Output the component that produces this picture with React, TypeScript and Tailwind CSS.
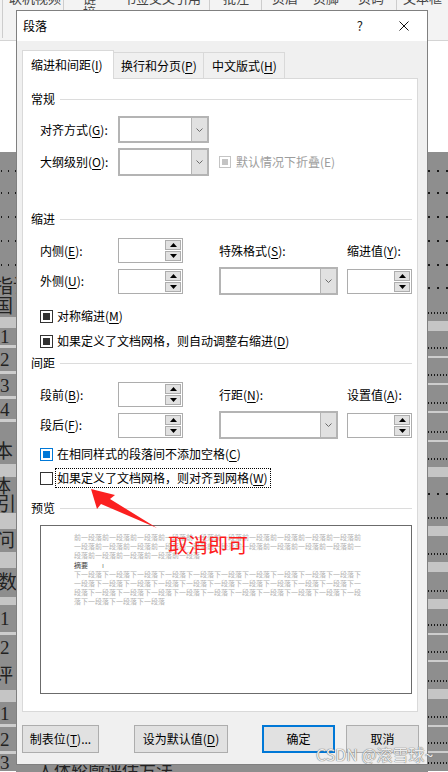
import React from "react";

type SegK = "g" | "sd" | "dd" | "band" | "line" | "t";
type Seg = { h: string; k: SegK; t?: string; o?: string };

const LEFT: Seg[] = [
  { h: "h-[8px]", k: "g" },
  { h: "h-[22px]", k: "sd" },
  { h: "h-[22px]", k: "sd" },
  { h: "h-[26px]", k: "sd" },
  { h: "h-[22px]", k: "sd" },
  { h: "h-[26px]", k: "sd" },
  { h: "h-[17px]", k: "t", t: "指论", o: "-ml-[6px]" },
  { h: "h-[22px]", k: "t", t: "国", o: "-ml-[6px]" },
  { h: "h-[11px]", k: "band" },
  { h: "h-[17px]", k: "t", t: "1", o: "ml-0" },
  { h: "h-[3px]", k: "line" },
  { h: "h-[23px]", k: "t", t: "2", o: "ml-0" },
  { h: "h-[3px]", k: "line" },
  { h: "h-[22px]", k: "t", t: "3", o: "ml-0" },
  { h: "h-[3px]", k: "line" },
  { h: "h-[20px]", k: "t", t: "4", o: "ml-0" },
  { h: "h-[3px]", k: "line" },
  { h: "h-[17px]", k: "g" },
  { h: "h-[25px]", k: "t", t: "本", o: "-ml-[6px]" },
  { h: "h-[13px]", k: "band" },
  { h: "h-[18px]", k: "t", t: "体", o: "-ml-[8px]" },
  { h: "h-[18px]", k: "t", t: "引", o: "-ml-[3px]" },
  { h: "h-[16px]", k: "band" },
  { h: "h-[23px]", k: "t", t: "问", o: "-ml-[4px]" },
  { h: "h-[16px]", k: "band" },
  { h: "h-[29px]", k: "t", t: "数", o: "-ml-[2px]" },
  { h: "h-[8px]", k: "band" },
  { h: "h-[27px]", k: "t", t: "1", o: "ml-0" },
  { h: "h-[3px]", k: "line" },
  { h: "h-[25px]", k: "t", t: "2", o: "ml-0" },
  { h: "h-[30px]", k: "t", t: "评", o: "-ml-[6px]" },
  { h: "h-[12px]", k: "band" },
  { h: "h-[22px]", k: "t", t: "1", o: "ml-0" },
  { h: "h-[3px]", k: "line" },
  { h: "h-[24px]", k: "t", t: "2", o: "ml-0" },
  { h: "h-[3px]", k: "line" },
  { h: "h-[17px]", k: "t", t: "3", o: "ml-0" },
];

const RIGHT: Seg[] = [
  { h: "h-[9px]", k: "g" },
  { h: "h-[20px]", k: "sd" },
  { h: "h-[23px]", k: "sd" },
  { h: "h-[26px]", k: "sd" },
  { h: "h-[22px]", k: "sd" },
  { h: "h-[26px]", k: "sd" },
  { h: "h-[20px]", k: "sd" },
  { h: "h-[23px]", k: "dd" },
  { h: "h-[10px]", k: "band" },
  { h: "h-[25px]", k: "dd" },
  { h: "h-[2px]", k: "line" },
  { h: "h-[25px]", k: "dd" },
  { h: "h-[2px]", k: "line" },
  { h: "h-[26px]", k: "dd" },
  { h: "h-[2px]", k: "line" },
  { h: "h-[27px]", k: "dd" },
  { h: "h-[2px]", k: "line" },
  { h: "h-[25px]", k: "dd" },
  { h: "h-[10px]", k: "band" },
  { h: "h-[34px]", k: "sd" },
  { h: "h-[15px]", k: "dd" },
  { h: "h-[10px]", k: "band" },
  { h: "h-[26px]", k: "dd" },
  { h: "h-[10px]", k: "band" },
  { h: "h-[27px]", k: "dd" },
  { h: "h-[10px]", k: "band" },
  { h: "h-[24px]", k: "dd" },
  { h: "h-[2px]", k: "line" },
  { h: "h-[25px]", k: "dd" },
  { h: "h-[2px]", k: "line" },
  { h: "h-[27px]", k: "dd" },
  { h: "h-[10px]", k: "band" },
  { h: "h-[26px]", k: "dd" },
  { h: "h-[2px]", k: "line" },
  { h: "h-[24px]", k: "dd" },
  { h: "h-[2px]", k: "line" },
  { h: "h-[18px]", k: "dd" },
];

function SegView({ s, side }: { s: Seg; side: "l" | "r" }) {
  if (s.k === "band") return <div className={`${s.h} shrink-0 bg-[#c5c5c5]`} />;
  if (s.k === "line") return <div className={`${s.h} shrink-0 bg-[#cdcdcd]`} />;
  if (s.k === "g") return <div className={`${s.h} shrink-0 bg-[#8e8e8e]`} />;
  if (s.k === "sd")
    return (
      <div
        className={`${s.h} flex shrink-0 items-center bg-[#8e8e8e] ${
          side === "l" ? "gap-[6px] pl-[1px]" : "gap-[7px] pl-0"
        }`}
      >
        <div className="h-[2px] w-[2px] bg-[#1a1a1a]" />
        <div className="h-[2px] w-[2px] bg-[#1a1a1a]" />
        <div className="h-[2px] w-[2px] bg-[#1a1a1a]" />
      </div>
    );
  if (s.k === "dd")
    return (
      <div className={`${s.h} flex shrink-0 flex-col justify-end bg-[#8e8e8e] pb-[7px]`}>
        <div className="h-[2px] w-full bg-[linear-gradient(to_right,#1a1a1a_50%,transparent_50%)] bg-[length:3px_2px]" />
      </div>
    );
  return (
    <div className={`${s.h} flex shrink-0 items-center overflow-visible bg-[#8e8e8e]`}>
      <span
        className={`${s.o} whitespace-nowrap font-['Liberation_Serif','Noto_Sans_CJK_SC',serif] text-[19px] leading-none text-[#222]`}
      >
        {s.t}
      </span>
    </div>
  );
}

function Ribbon() {
  return (
    <div className="flex h-[41px] shrink-0 overflow-hidden border-b border-[#d4d4d4] bg-[#f3f3f3] text-[13px] leading-[14px] text-[#444]">
      <div className="h-[38px] w-[3px] border-r border-[#cdcdcd]" />
      <div className="h-[38px] w-[61px] border-r border-[#cdcdcd] pl-[6px]">
        <div className="-mt-[9px] whitespace-nowrap">联机视频</div>
      </div>
      <div className="flex h-[38px] w-[146px] border-r border-[#cdcdcd] pl-[19px]">
        <div className="-mt-[9px] flex flex-col">
          <span>链</span>
          <span>接</span>
        </div>
        <div className="-mt-[9px] ml-[27px] whitespace-nowrap">书签</div>
        <div className="-mt-[9px] ml-[0px] whitespace-nowrap">交叉引用</div>
      </div>
      <div className="h-[38px] w-[52px] border-r border-[#cdcdcd] pl-[13px]">
        <div className="-mt-[9px] whitespace-nowrap">批注</div>
      </div>
      <div className="flex h-[38px] w-[135px] border-r border-[#cdcdcd] pl-[10px]">
        <div className="-mt-[9px] whitespace-nowrap">页眉</div>
        <div className="-mt-[9px] ml-[15px] whitespace-nowrap">页脚</div>
        <div className="-mt-[9px] ml-[19px] whitespace-nowrap">页码</div>
      </div>
      <div className="h-[38px] flex-1 pl-[6px]">
        <div className="-mt-[9px] whitespace-nowrap">文本框</div>
      </div>
    </div>
  );
}

function Background() {
  return (
    <div className="flex h-full flex-col">
      <Ribbon />
      <div className="h-[111px] shrink-0 bg-white" />
      <div className="flex flex-1 overflow-hidden">
        <div className="flex w-[16px] shrink-0 flex-col overflow-hidden">
          {LEFT.map((s, i) => (
            <SegView key={i} s={s} side="l" />
          ))}
        </div>
        <div className="flex w-[412px] shrink-0 flex-col justify-end overflow-hidden bg-[#8e8e8e]">
          <div className="-mb-[6px] whitespace-nowrap pl-[21px] text-[17px] leading-[17px] text-[#222]">
            人体轮廓评估方法
          </div>
        </div>
        <div className="flex flex-1 flex-col overflow-hidden">
          {RIGHT.map((s, i) => (
            <SegView key={i} s={s} side="r" />
          ))}
        </div>
      </div>
    </div>
  );
}

function A({ children }: { children: React.ReactNode }) {
  return <span className="underline underline-offset-[2px]">{children}</span>;
}

function Chevron() {
  return (
    <svg width="7" height="4" viewBox="0 0 7 4">
      <path d="M0.5 0.5L3.5 3.5L6.5 0.5" fill="none" stroke="#6a6a6a" strokeWidth="1" />
    </svg>
  );
}

function Combo({ className }: { className: string }) {
  return (
    <div className={`flex shrink-0 border-2 border-[#b4b4b4] bg-white ${className}`}>
      <div className="flex-1" />
      <div className="flex w-[16px] items-center justify-center border-l border-[#b4b4b4] bg-[#e1e1e1]">
        <Chevron />
      </div>
    </div>
  );
}

function Spin({ className = "" }: { className?: string }) {
  return (
    <div
      className={`flex h-[25px] w-[65px] shrink-0 items-center justify-end border border-[#adadad] bg-white pr-px ${className}`}
    >
      <div className="flex flex-col gap-px">
        <div className="flex h-[10px] w-[16px] items-center justify-center border border-[#adadad] bg-[#e1e1e1]">
          <svg width="7" height="4" viewBox="0 0 7 4">
            <path d="M0 4L3.5 0L7 4Z" fill="#000" />
          </svg>
        </div>
        <div className="flex h-[10px] w-[16px] items-center justify-center border border-[#adadad] bg-[#e1e1e1]">
          <svg width="7" height="4" viewBox="0 0 7 4">
            <path d="M0 0L7 0L3.5 4Z" fill="#000" />
          </svg>
        </div>
      </div>
    </div>
  );
}

function Section({ title, className }: { title: string; className: string }) {
  return (
    <div className={`flex h-[16px] shrink-0 items-center pl-[8px] pr-[5px] ${className}`}>
      <span>{title}</span>
      <div className="ml-[5px] h-px flex-1 bg-[#dcdcdc]" />
    </div>
  );
}

function BoxOn({ blue = false }: { blue?: boolean }) {
  return (
    <div
      className={`flex h-[13px] w-[13px] shrink-0 items-center justify-center border bg-white ${
        blue ? "border-[#0078d7]" : "border-[#333333]"
      }`}
    >
      <div className={`h-[7px] w-[7px] ${blue ? "bg-[#0078d7]" : "bg-[#333333]"}`} />
    </div>
  );
}

const PREV = "前一段落".repeat(25);
const NEXT = "下一段落".repeat(34);

function Dialog() {
  return (
    <div className="absolute left-[16px] top-[10px] flex h-[755px] w-[412px] flex-col border border-[#808080] bg-[#f0f0f0] text-[12px] leading-[16px] text-black">
      <div className="flex h-[30px] shrink-0 items-center bg-white pl-[6px] pr-[18px]">
        <span className="text-[12px]">段落</span>
        <span className="ml-auto text-[13px] text-[#222]">?</span>
        <svg className="ml-[36px]" width="10" height="10" viewBox="0 0 10 10">
          <path d="M0.5 0.5L9.5 9.5M9.5 0.5L0.5 9.5" stroke="#111" strokeWidth="1" />
        </svg>
      </div>
      <div className="flex flex-1 flex-col pl-[5px] pt-[9px]">
        <div className="relative z-10 flex h-[29px] items-end">
          <div className="flex h-[29px] w-[92px] items-center border border-b-0 border-[#d9d9d9] bg-white pb-[1px] pl-[8px] whitespace-nowrap">
            缩进和间距(<A>I</A>)
          </div>
          <div className="mb-[1px] flex h-[26px] w-[90px] items-center border border-b-0 border-l-0 border-[#d9d9d9] bg-[#f0f0f0] pl-[7px] whitespace-nowrap">
            换行和分页(<A>P</A>)
          </div>
          <div className="mb-[1px] flex h-[26px] w-[81px] items-center border border-b-0 border-l-0 border-[#d9d9d9] bg-[#f0f0f0] pl-[8px] whitespace-nowrap">
            中文版式(<A>H</A>)
          </div>
        </div>
        <div className="-mt-[1px] flex h-[634px] w-[396px] flex-col border border-[#d9d9d9] bg-white">
          <Section title="常规" className="mt-[12px]" />
          <div className="mt-[9px] flex h-[27px] items-center pl-[17px]">
            <div className="w-[78px] whitespace-nowrap">
              对齐方式(<A>G</A>):
            </div>
            <Combo className="h-[27px] w-[91px]" />
          </div>
          <div className="mt-[5px] flex h-[28px] items-center pl-[17px]">
            <div className="w-[78px] whitespace-nowrap">
              大纲级别(<A>O</A>):
            </div>
            <Combo className="h-[28px] w-[91px]" />
            <div className="ml-[10px] flex h-[12px] w-[12px] items-center justify-center border border-[#c4c4c4] bg-white">
              <div className="h-[6px] w-[6px] bg-[#c4c4c4]" />
            </div>
            <span className="ml-[5px] whitespace-nowrap text-[#9d9d9d]">默认情况下折叠(E)</span>
          </div>

          <Section title="缩进" className="mt-[35px]" />
          <div className="mt-[11px] flex h-[25px] items-center pl-[17px]">
            <div className="w-[78px] whitespace-nowrap">
              内侧(<A>E</A>):
            </div>
            <Spin />
            <div className="ml-[36px] w-[128px] whitespace-nowrap">
              特殊格式(<A>S</A>):
            </div>
            <div className="whitespace-nowrap">
              缩进值(<A>Y</A>):
            </div>
          </div>
          <div className="mt-[4px] flex h-[28px] items-center pl-[17px]">
            <div className="w-[78px] whitespace-nowrap">
              外侧(<A>U</A>):
            </div>
            <Spin />
            <Combo className="ml-[36px] h-[28px] w-[119px]" />
            <Spin className="ml-[9px]" />
          </div>
          <div className="mt-[13px] flex h-[16px] items-center pl-[17px]">
            <BoxOn />
            <span className="ml-[4px] whitespace-nowrap">
              对称缩进(<A>M</A>)
            </span>
          </div>
          <div className="mt-[9px] flex h-[16px] items-center pl-[17px]">
            <BoxOn />
            <span className="ml-[4px] whitespace-nowrap">
              如果定义了文档网格，则自动调整右缩进(<A>D</A>)
            </span>
          </div>

          <Section title="间距" className="mt-[6px]" />
          <div className="mt-[11px] flex h-[25px] items-center pl-[17px]">
            <div className="w-[78px] whitespace-nowrap">
              段前(<A>B</A>):
            </div>
            <Spin />
            <div className="ml-[36px] w-[128px] whitespace-nowrap">
              行距(<A>N</A>):
            </div>
            <div className="whitespace-nowrap">
              设置值(<A>A</A>):
            </div>
          </div>
          <div className="mt-[4px] flex h-[28px] items-center pl-[17px]">
            <div className="w-[78px] whitespace-nowrap">
              段后(<A>F</A>):
            </div>
            <Spin />
            <Combo className="ml-[36px] h-[28px] w-[119px]" />
            <Spin className="ml-[9px]" />
          </div>
          <div className="mt-[7px] flex h-[16px] items-center pl-[17px]">
            <BoxOn blue />
            <span className="ml-[4px] whitespace-nowrap">
              在相同样式的段落间不添加空格(<A>C</A>)
            </span>
          </div>
          <div className="mt-[6px] flex h-[20px] items-center pl-[17px]">
            <div className="h-[13px] w-[13px] shrink-0 border border-[#333333] bg-white" />
            <div className="ml-[2px] flex h-[20px] items-center whitespace-nowrap border border-dotted border-black pl-[1px] pr-[2px]">
              如果定义了文档网格，则对齐到网格(<A>W</A>)
            </div>
          </div>

          <Section title="预览" className="mt-[12px]" />
          <div className="ml-[17px] mt-[9px] h-[169px] w-[372px] border border-[#6b6b6b] bg-white pl-[33px] pt-[7px]">
            <div className="w-[290px] break-all text-[7px] leading-[9px] text-[#b2b2b2]">{PREV}</div>
            <div className="mt-px flex h-[9px] items-center text-[7px] leading-[9px] text-[#444]">
              <span>摘要</span>
              <span className="ml-[14px] text-[#777]">ı</span>
            </div>
            <div className="w-[290px] break-all text-[7px] leading-[9px] text-[#b2b2b2]">{NEXT}</div>
          </div>
        </div>
        <div className="mt-[13px] flex h-[28px]">
          <div className="flex h-[28px] w-[77px] items-center justify-center whitespace-nowrap border border-[#adadad] bg-[#e1e1e1]">
            制表位(<A>T</A>)...
          </div>
          <div className="ml-[35px] flex h-[28px] w-[94px] items-center justify-center whitespace-nowrap border border-[#adadad] bg-[#e1e1e1]">
            设为默认值(<A>D</A>)
          </div>
          <div className="ml-[34px] flex h-[28px] w-[73px] items-center justify-center border-2 border-[#0078d7] bg-[#e1e1e1]">
            确定
          </div>
          <div className="ml-[11px] flex h-[28px] w-[73px] items-center justify-center border border-[#adadad] bg-[#e1e1e1]">
            取消
          </div>
        </div>
      </div>
    </div>
  );
}

export default function App() {
  return (
    <div className="relative h-[772px] w-[448px] overflow-hidden bg-white font-['Noto_Sans_CJK_SC',sans-serif]">
      <Background />
      <Dialog />
      <svg
        className="pointer-events-none absolute left-[85px] top-[484px]"
        width="80"
        height="50"
        viewBox="0 0 80 50"
      >
        <polygon points="6,5 30,11 25,15 72,44 16,20 12,25" fill="#fb2020" />
      </svg>
      <div className="pointer-events-none absolute left-[168px] top-[533px] whitespace-nowrap text-[20px] leading-[24px] text-[#fe1c1c]">
        取消即可
      </div>
      <div className="pointer-events-none absolute left-[316px] top-[745px] whitespace-nowrap text-[16px] leading-[18px] text-[#ececec] [text-shadow:0_0_1px_#6e6e6e,0_0_1px_#6e6e6e]">
        CSDN @滚雪球~
      </div>
    </div>
  );
}
